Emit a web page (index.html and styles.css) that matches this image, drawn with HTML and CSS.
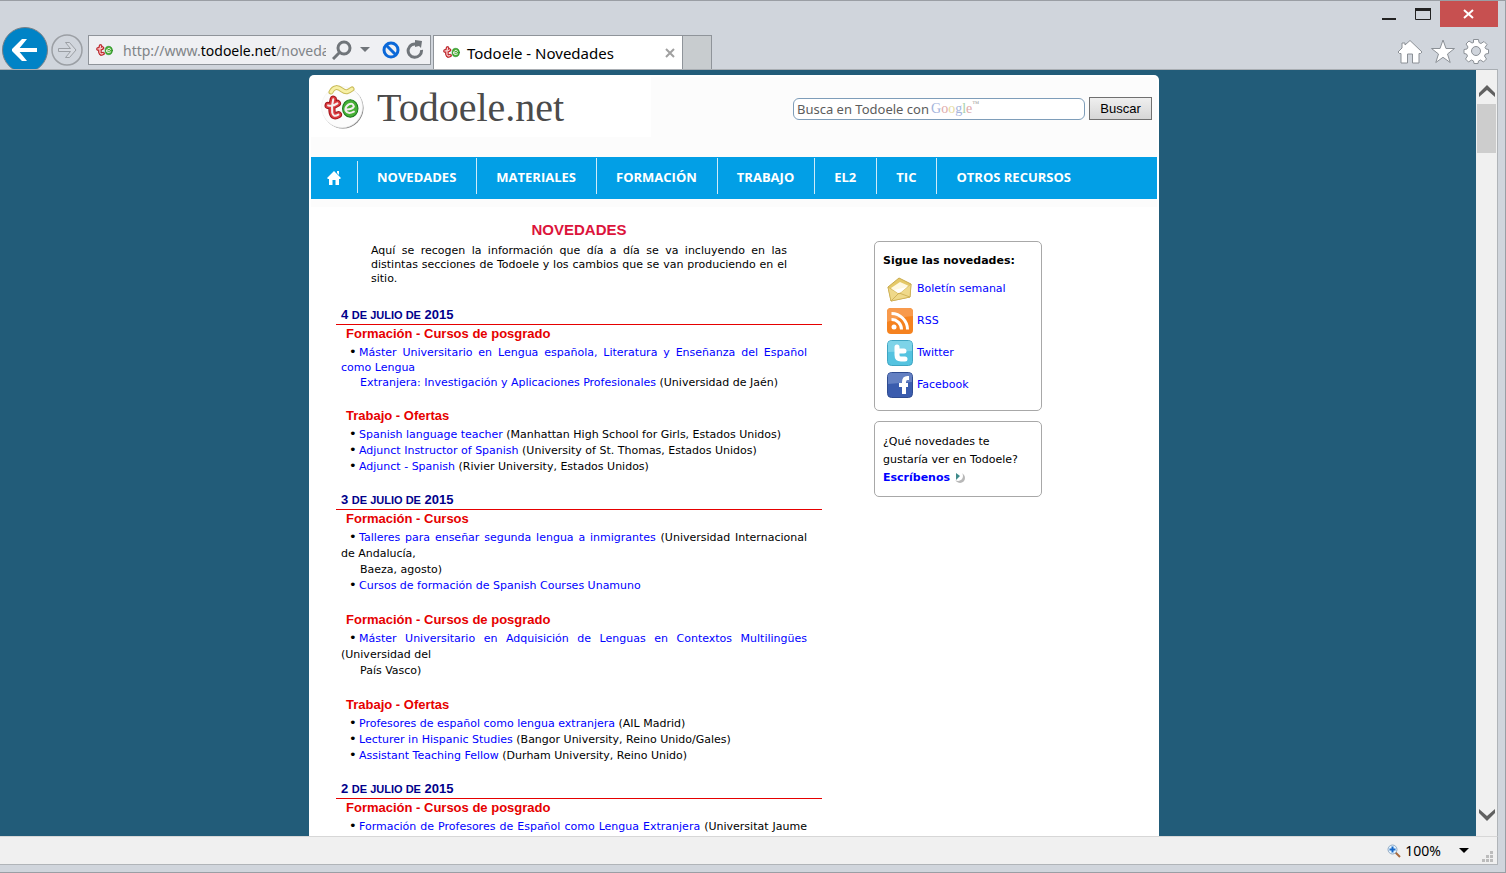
FILE: index.html
```html
<!DOCTYPE html>
<html lang="es">
<head>
<meta charset="utf-8">
<title>Todoele - Novedades</title>
<link rel="stylesheet" href="styles.css">
</head>
<body>
<svg class="defs" aria-hidden="true">
  <defs>
    <symbol id="letters" viewBox="0 0 34 26">
      <g fill="none" stroke-linecap="round" stroke-linejoin="round">
        <path d="M9 4q-2 7-1 13 1 5 6 2M4 10q5 1 9-2" stroke="#a3161c" stroke-width="7"/>
        <path d="M9 4q-2 7-1 13 1 5 6 2M4 10q5 1 9-2" stroke="#dc3a3e" stroke-width="5"/>
        <ellipse cx="25.500" cy="13" rx="7.500" ry="8.500" fill="#46b035" stroke="#1c7a20"/>
        <path d="M9 4q-2 7-1 13 1 5 6 2M4 10q5 1 9-2M22 14q6 0 7-3-1-4-5-2-4 3-3 6 2 4 8 1" stroke="#f4eeee" stroke-width="2"/>
      </g>
    </symbol>
  </defs>
</svg>
<div class="window">
  <header class="chrome">
    <div class="caption">
      <button class="cap" aria-label="Minimizar"><svg width="16" height="16"><path d="M1 13h14" stroke="#222" stroke-width="2"/></svg></button>
      <button class="cap" aria-label="Maximizar"><svg width="16" height="16"><path d="M.5 2.500h15v11H.5z" fill="none" stroke="#222"/><path d="M0 3.500h16" stroke="#222" stroke-width="3"/></svg></button>
      <button class="cap close" aria-label="Cerrar"><svg width="12" height="12"><path d="M1 2l9 8M10 2l-9 8" stroke="#fff" stroke-width="2"/></svg></button>
    </div>
    <div class="toolbar">
      <button class="back" aria-label="Atrás"><svg width="46" height="46"><circle cx="23" cy="23" r="22.500" fill="#0083c6" stroke="#777f86"/><path d="M35 23H13" stroke="#fff" stroke-width="4"/><path d="M20 12h5l-9 11 9 11h-5L10 24v-2z" fill="#fff"/></svg></button>
      <button class="forward" aria-label="Adelante"><svg width="32" height="32"><circle cx="16" cy="16" r="15" fill="none" stroke="#9b9fa4" stroke-width="1.500"/><path d="M7.500 14.500h12l-5-6h4l6.500 7.500-6.500 7.500h-4l5-6h-12z" fill="#d6dae0" stroke="#9b9fa4"/></svg></button>
      <div class="address">
        <svg class="fav" width="17" height="13"><use href="#letters"/></svg>
        <a class="url" href="#">http://www.<b>todoele.net</b>/novedades</a>
        <button aria-label="Buscar en la web"><svg width="20" height="20"><circle cx="12" cy="8" r="6" fill="none" stroke="#70757a" stroke-width="3"/><path d="M8 12l-7 7" stroke="#70757a" stroke-width="3"/></svg></button>
        <button class="drop" aria-label="Historial"><svg width="10" height="6"><path d="M0 0h10L5 5z" fill="#70757a"/></svg></button>
        <button aria-label="Bloqueo"><svg width="18" height="18"><circle cx="9" cy="9" r="7" fill="none" stroke="#0b68d8" stroke-width="3"/><path d="M4 4l10 10" stroke="#0b68d8" stroke-width="3"/></svg></button>
        <button aria-label="Actualizar"><svg width="18" height="20"><path d="M15.500 10a6.700 6.700 0 1 1-4-5.500" fill="none" stroke="#70757a" stroke-width="3"/><path d="M9 0l7 1-1 7-2-2-4 1z" fill="#70757a"/></svg></button>
      </div>
      <div class="tab">
        <svg class="fav" width="17" height="13"><use href="#letters"/></svg>
        <span>Todoele - Novedades</span>
        <button aria-label="Cerrar pestaña"><svg width="12" height="12"><path d="M2 2l8 8M10 2l-8 8" stroke="#a0a0a0" stroke-width="2"/></svg></button>
      </div>
      <button class="newtab" aria-label="Nueva pestaña"></button>
      <div class="tools">
        <button aria-label="Inicio"><svg width="26" height="26"><path d="M13 2.500L25 14l-1.500 1.500H22V25h-6.500v-9h-5v9H4v-9.500H2.500L1 14l4-4V5h3v2z" fill="#fff" stroke="#8b9096"/></svg></button>
        <button aria-label="Favoritos"><svg width="26" height="26"><path d="M13 2l3 8.500h8.500l-7 5.500 2.700 8.500L13 19.300l-7.200 5.200L8.500 16l-7-5.500H10z" fill="#fff" stroke="#8b9096"/></svg></button>
        <button aria-label="Herramientas"><svg width="26" height="26" viewBox="-13 -13 26 26"><path d="M-2.500-11.500h5l.5 3 2 1 3-2 3 3-2 3 1 1.500 2.500.5v4l-3 .5-1 2 2 3-3 3-3-2-2 1-.5 2.500h-4l-.5-2.500-2-1-3 2-3-3 2-3-1-2-2.500-.5v-4l3-.5 1-2-2-3 3-3 3 2 1.500-.5z" fill="#fff" stroke="#8b9096"/><circle r="4.500" fill="#d0d5dc" stroke="#8b9096"/></svg></button>
      </div>
    </div>
  </header>

  <div class="client">
    <div class="view">
      <div class="page">
        <div class="head">
          <div class="brand">
            <svg width="46" height="46" viewBox="0 0 46 46">
              <circle cx="23" cy="24" r="20.500" fill="#777"/>
              <circle cx="22.500" cy="23.500" r="20.500" fill="#c4c4c4"/>
              <circle cx="22" cy="23" r="20.500" fill="#fcfcfc" stroke="#eee" stroke-width=".5"/>
              <path d="M11 8C14 2 18 3 22 6S28 8 32 5" fill="none" stroke="#c9bb59" stroke-width="5" stroke-linecap="round"/>
              <path d="M11 8C14 2 18 3 22 6S28 8 32 5" fill="none" stroke="#f7f0a6" stroke-width="3" stroke-linecap="round"/>
              <svg x="4" y="11" width="35" height="27"><use href="#letters"/></svg>
            </svg>
            <span>Todoele.net</span>
          </div>
          <form class="search">
            <label class="field"><input type="text" aria-label="Busca en Todoele con Google" placeholder="Busca en Todoele con"><span class="google"><i class="b">G</i><i class="r">o</i><i class="y">o</i><i class="b">g</i><i class="e">l</i><i class="r">e</i><small>™</small></span></label>
            <button type="button">Buscar</button>
          </form>
        </div>
        <nav class="menu">
          <a class="home" href="#" aria-label="Inicio"><svg width="14" height="16"><path d="M7 1l7 7-1 1h-1v6H8.500v-5h-3v5H2V9H1L0 8l7-7zM10 1h2v4l-2-2z" fill="#fff"/></svg></a>
          <a href="#">NOVEDADES</a>
          <a href="#">MATERIALES</a>
          <a href="#">FORMACIÓN</a>
          <a href="#">TRABAJO</a>
          <a href="#">EL2</a>
          <a href="#">TIC</a>
          <a href="#">OTROS RECURSOS</a>
        </nav>
        <div class="columns">
          <main class="news">
            <h1>NOVEDADES</h1>
            <p class="intro">Aquí se recogen la información que día a día se va incluyendo en las distintas secciones de Todoele y los cambios que se van produciendo en el sitio.</p>

            <h2>4 <small>DE JULIO DE</small> 2015</h2>
            <h3>Formación - Cursos de posgrado</h3>
            <ul class="tight">
              <li><a href="#">Máster Universitario en Lengua española, Literatura y Enseñanza del Español como Lengua</a> <span class="cont"><a href="#">Extranjera: Investigación y Aplicaciones Profesionales</a> (Universidad de Jaén)</span></li>
            </ul>
            <h3>Trabajo - Ofertas</h3>
            <ul>
              <li><a href="#">Spanish language teacher</a> (Manhattan High School for Girls, Estados Unidos)</li>
              <li><a href="#">Adjunct Instructor of Spanish</a> (University of St. Thomas, Estados Unidos)</li>
              <li><a href="#">Adjunct - Spanish</a> (Rivier University, Estados Unidos)</li>
            </ul>

            <h2>3 <small>DE JULIO DE</small> 2015</h2>
            <h3>Formación - Cursos</h3>
            <ul>
              <li><a href="#">Talleres para enseñar segunda lengua a inmigrantes</a> (Universidad Internacional de Andalucía, <span class="cont">Baeza, agosto)</span></li>
              <li><a href="#">Cursos de formación de Spanish Courses Unamuno</a></li>
            </ul>
            <h3>Formación - Cursos de posgrado</h3>
            <ul>
              <li><a href="#">Máster Universitario en Adquisición de Lenguas en Contextos Multilingües</a> (Universidad del <span class="cont">País Vasco)</span></li>
            </ul>
            <h3>Trabajo - Ofertas</h3>
            <ul>
              <li><a href="#">Profesores de español como lengua extranjera</a> (AIL Madrid)</li>
              <li><a href="#">Lecturer in Hispanic Studies</a> (Bangor University, Reino Unido/Gales)</li>
              <li><a href="#">Assistant Teaching Fellow</a> (Durham University, Reino Unido)</li>
            </ul>

            <h2>2 <small>DE JULIO DE</small> 2015</h2>
            <h3>Formación - Cursos de posgrado</h3>
            <ul>
              <li><a href="#">Formación de Profesores de Español como Lengua Extranjera</a> (Universitat Jaume I)</li>
            </ul>
          </main>
          <aside class="side">
            <section class="box follow">
              <h4>Sigue las novedades:</h4>
              <a href="#"><svg width="26" height="28"><path d="M1 12L12 3l12 6-1 13-19 4z" fill="#e5c968" stroke="#c9aa4c"/><path d="M4 13l9-6 9 4-3 6-12 2z" fill="#fff8df"/><path d="M1 12l11 7 12-10-1 13-19 4z" fill="#efd98a" stroke="#c9aa4c" stroke-width=".6"/><path d="M4 26l8-8 11 4" fill="none" stroke="#c9aa4c" stroke-width=".8"/><path d="M7 15l13-3-6 5-3 1z" fill="#fff"/></svg>Boletín semanal</a>
              <a href="#"><svg width="26" height="28"><rect y="1" width="26" height="26" rx="4" fill="#f5821f"/><path d="M0 12V5q0-4 4-4h18q4 0 4 4v4Q12 10 0 15z" fill="#f89a4c"/><circle cx="7" cy="20" r="2.500" fill="#fff"/><path d="M4.500 12.500A10 10 0 0 1 14.500 22.500M4.500 6.500A16 16 0 0 1 20.500 22.500" fill="none" stroke="#fff" stroke-width="3"/></svg>RSS</a>
              <a href="#"><svg width="26" height="28"><rect x=".5" y="1.500" width="25" height="25" rx="4" fill="#55c3e0" stroke="#3fa5c2"/><path d="M1 13V5q0-3 3-3h18q3 0 3 3v7z" fill="#7dd3e8"/><path d="M10 8v8q0 4 4 4h4M10 12h7" fill="none" stroke="#fff" stroke-width="5" stroke-linecap="round" stroke-linejoin="round"/></svg>Twitter</a>
              <a href="#"><svg width="26" height="28"><rect x=".5" y="1.500" width="25" height="25" rx="4" fill="#3a5cae" stroke="#2f4c90"/><path d="M1 13V5q0-3 3-3h18q3 0 3 3v6z" fill="#6480c2"/><path d="M22 7h-1.500Q17 7 17 11v12M12 14h9" fill="none" stroke="#fff" stroke-width="4"/></svg>Facebook</a>
            </section>
            <section class="box ask">
              ¿Qué novedades te gustaría ver en Todoele? <a href="#">Escríbenos<svg width="14" height="14"><circle cx="7" cy="7" r="5" fill="#b8b8b8"/><circle cx="5" cy="5" r="5" fill="#fff"/><path d="M3 2l4 3-4 4z" fill="#3d8a8a"/></svg></a>
            </section>
          </aside>
        </div>
      </div>
    </div>
    <div class="scroll">
      <svg width="16" height="14"><path d="M0 12V9l8-8 8 8v4L8 6l-8 7z" fill="#606060"/></svg>
      <div class="thumb"></div>
      <svg class="down" width="16" height="14"><path d="M0 1l8 7 8-7v4l-8 8-8-8z" fill="#606060"/></svg>
    </div>
  </div>

  <footer class="status">
    <button><svg width="14" height="14"><path d="M8 8l5 5" stroke="#a8683c" stroke-width="2"/><circle cx="5.500" cy="5.500" r="4.500" fill="#e4f2fc" stroke="#8fa9c4"/><path d="M5.500 2.500v6M2.500 5.500h6" stroke="#1668c8" stroke-width="2"/></svg>100%</button>
    <button aria-label="Nivel de zoom"><svg width="10" height="6"><path d="M0 0h10L5 5z" fill="#000"/></svg></button>
    <svg class="grip" width="12" height="12" fill="#bcbcbc"><path d="M8 0h3v3H8zM4 4h3v3H4zM8 4h3v3H8zM0 8h3v3H0zM4 8h3v3H4zM8 8h3v3H8z"/></svg>
  </footer>
</div>
</body>
</html>
```

FILE: styles.css
```css
* { box-sizing: border-box; }
body { margin: 0; font-family: "DejaVu Sans", Verdana, sans-serif; font-size: 11px; color: #000; }
button { border: 0; padding: 0; background: none; font: inherit; color: inherit; display: flex; align-items: center; justify-content: center; }
svg { display: block; flex: none; }
a { color: #00f; text-decoration: none; }
.defs { position: absolute; width: 0; height: 0; }

.window { height: 100vh; display: flex; flex-direction: column; padding: 0 7px 7px 0; background: #d0d5dc; border: 1px solid #9a9ea4; border-left: 0; }

.chrome { flex: none; font-family: "Noto Sans", sans-serif; font-size: 15px; }
.caption { display: flex; justify-content: flex-end; height: 26px; }
.cap { width: 34px; }
.close { width: 58px; background: #c75050; }
.toolbar { display: flex; height: 42px; overflow: hidden; align-items: flex-end; }
.back { align-self: flex-start; margin-left: 2px; width: 46px; height: 46px; }
.forward { width: 32px; height: 32px; margin: 0 5px 3px 3px; }
.address { display: flex; align-items: center; width: 343px; height: 30px; margin-bottom: 4px; padding: 0 6px 0 7px; border: 1px solid #8f949a; background: #eff0f3; }
.fav { margin-right: 10px; }
.url { flex: 1; overflow: hidden; white-space: nowrap; font-size: 14px; color: #808488; }
.url b { color: #000; font-weight: 400; }
.address button { margin-left: 6px; }
.address .drop { margin: 0 6px 0 8px; }
.tab { display: flex; align-items: center; width: 250px; height: 34px; margin-left: 2px; padding: 0 6px 0 9px; background: #fff; border: 1px solid #8f949a; border-bottom: 0; }
.tab .fav { margin-right: 7px; }
.tab button { margin-left: auto; }
.newtab { width: 29px; height: 34px; background: #c8cccf; border: 1px solid #8f949a; border-width: 1px 1px 0 0; }
.tools { display: flex; gap: 7px; margin-left: auto; padding: 0 9px 5px 0; }

.client { flex: 1; min-height: 0; display: flex; border-top: 1px solid #a9aeb3; border-right: 1px solid #b0b4b8; }
.view { flex: 1; min-width: 0; overflow: hidden; padding: 5px 8px 0 0; background: #225c79; }
.page { max-width: 850px; min-height: 100%; margin: 0 auto; padding: 2px; background: #fff; border-radius: 5px 5px 0 0; }

.head { display: flex; justify-content: space-between; align-items: flex-start; height: 80px; background: #fcfcfc; }
.brand { display: flex; align-items: center; width: 340px; height: 60px; padding-left: 9px; background: #fff; font-family: Georgia, "Liberation Serif", serif; font-size: 40px; color: #4b4b4b; }
.brand span { margin-left: 11px; }
.search { display: flex; align-items: center; gap: 4px; padding: 20px 5px 0 0; }
.field { position: relative; }
.field input { display: block; width: 292px; height: 22px; padding: 0 3px; border: 1px solid #7e9db9; border-radius: 6px; background: #fff; font-family: "Noto Sans", sans-serif; font-size: 13px; }
.field input::placeholder { color: #5c5c5c; opacity: 1; }
.google { position: absolute; left: 138px; top: 2px; font-family: "Liberation Serif", serif; font-size: 14px; line-height: 18px; pointer-events: none; }
.google i { font-style: normal; }
.google small { font-size: 7px; line-height: 8px; vertical-align: top; color: #999; }
.b { color: #a5b4dc; }
.r { color: #e0a9a9; }
.y { color: #e6dca0; }
.e { color: #a9d0a9; }
.search button { width: 63px; height: 23px; border: 1px solid #707070; background: linear-gradient(#efefef, #d6d6d6); font-family: "Liberation Sans", sans-serif; font-size: 13px; }

.menu { display: flex; height: 42px; padding-top: 1px; background: #029fe6; font-family: "Open Sans", sans-serif; font-size: 13px; font-weight: 700; line-height: 38px; }
.menu a { height: 36px; padding: 0 20px 0 19px; color: #fff; border-right: 1px solid #cdebf9; }
.menu a:last-child { border: 0; }
.menu .home { height: 32px; width: 47px; margin-top: 3px; padding: 9px 0 0 16px; }

.columns { display: flex; align-items: flex-start; border-top: 8px solid #fcfcfc; padding-left: 25px; }
.news { width: 486px; padding-top: 13px; }
h1, h2, h3, h4, p, ul { margin: 0; padding: 0; }
h1, h2, h3 { font-family: "Liberation Sans", Arial, sans-serif; }
h1 { font-size: 15px; line-height: 20px; text-align: center; color: #dc143c; }
.intro { margin: 4px 35px 0; line-height: 14px; text-align: justify; }
h2 { margin-top: 16px; padding-left: 5px; font-size: 13px; line-height: 17px; color: #00008b; border-bottom: 1px solid #e60000; }
h2 small { font-size: 11px; }
.intro + h2 { margin-top: 20px; }
h3 { margin: 17px 0 2px 10px; font-size: 13px; line-height: 18px; color: #e60000; }
h2 + h3 { margin-top: 0; }
ul { list-style: none; margin: 0 15px 0 5px; line-height: 16px; text-align: justify; }
.tight { line-height: 15px; }
li { text-indent: 8px; }
li::before { content: "•"; display: inline-block; width: 10px; font-size: 13px; line-height: 11px; text-indent: 0; }
.cont { display: block; padding-left: 19px; text-indent: 0; }

.side { width: 168px; margin: 34px 0 0 52px; }
.box { margin-bottom: 10px; padding: 9px 8px 7px; border: 1px solid #a8a8a8; border-radius: 5px; line-height: 18px; }
h4 { font-size: 11px; line-height: 20px; }
.follow { min-height: 170px; }
.follow a { display: flex; align-items: center; gap: 4px; height: 32px; padding-left: 4px; }
.follow h4 { margin-bottom: 2px; }
.ask { padding: 11px 8px 9px; }
.ask a { font-weight: 700; }
.ask svg { display: inline-block; margin-left: 3px; vertical-align: middle; }

.scroll { display: flex; flex-direction: column; align-items: center; width: 21px; padding: 14px 0; background: #f0f0f0; }
.thumb { width: 19px; height: 49px; margin-top: 6px; background: #cdcdcd; }
.down { margin-top: auto; }

.status { flex: none; display: flex; align-items: center; justify-content: flex-end; gap: 18px; height: 29px; padding-right: 3px; background: #f0f0f0; border: 1px solid #b0b4b8; border-top-color: #d7d7d7; border-left: 0; font-family: "Noto Sans", sans-serif; font-size: 14px; }
.status button { gap: 4px; }
.grip { align-self: flex-end; margin: 0 0 1px -5px; }
```
